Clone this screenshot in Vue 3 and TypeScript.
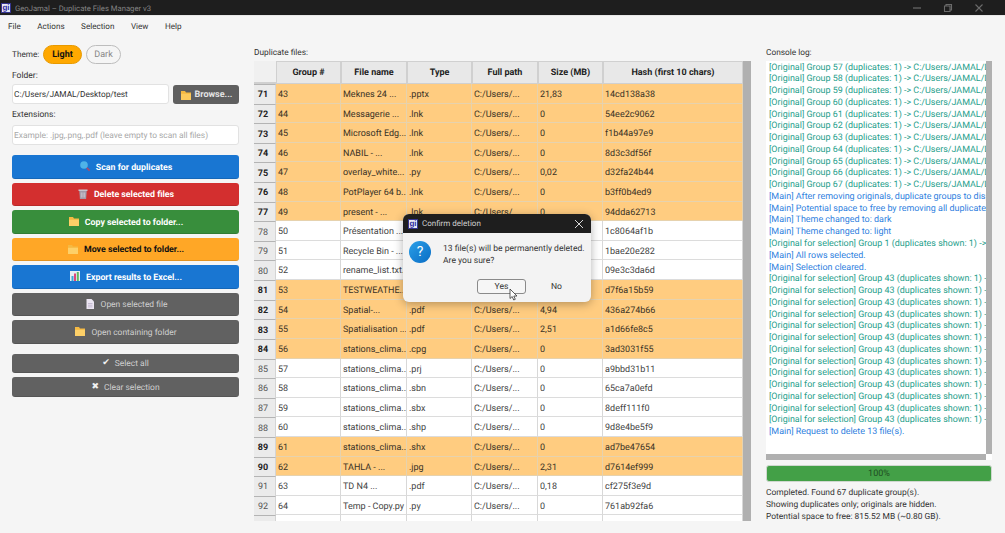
<script setup lang="ts">
interface Row { n: number; g: number; name: string; type: string; size: string; hash: string; sel: boolean }
const raw: [number, string, string, string, string, boolean][] = [
  [71, 'Meknes 24 ...', '.pptx', '21,83', '14cd138a38', true],
  [72, 'Messagerie ...', '.lnk', '0', '54ee2c9062', true],
  [73, 'Microsoft Edg...', '.lnk', '0', 'f1b44a97e9', true],
  [74, 'NABIL - ...', '.lnk', '0', '8d3c3df56f', true],
  [75, 'overlay_white...', '.py', '0,02', 'd32fa24b44', true],
  [76, 'PotPlayer 64 b...', '.lnk', '0', 'b3ff0b4ed9', true],
  [77, 'present - ...', '.lnk', '0', '94dda62713', true],
  [78, 'Présentation ...', '.pptx', '0', '1c8064af1b', false],
  [79, 'Recycle Bin - ...', '.lnk', '0', '1bae20e282', false],
  [80, 'rename_list.txt...', '.txt', '0', '09e3c3da6d', false],
  [81, 'TESTWEATHE...', '.py', '0', 'd7f6a15b59', true],
  [82, 'Spatial-...', '.pdf', '4,94', '436a274b66', true],
  [83, 'Spatialisation ...', '.pdf', '2,51', 'a1d66fe8c5', true],
  [84, 'stations_clima...', '.cpg', '0', '3ad3031f55', true],
  [85, 'stations_clima...', '.prj', '0', 'a9bbd31b11', false],
  [86, 'stations_clima...', '.sbn', '0', '65ca7a0efd', false],
  [87, 'stations_clima...', '.sbx', '0', '8deff111f0', false],
  [88, 'stations_clima...', '.shp', '0', '9d8e4be5f9', false],
  [89, 'stations_clima...', '.shx', '0', 'ad7be47654', true],
  [90, 'TAHLA - ...', '.jpg', '2,31', 'd7614ef999', true],
  [91, 'TD N4  ...', '.pdf', '0,18', 'cf275f3e9d', false],
  [92, 'Temp - Copy.py', '.py', '0', '761ab92fa6', false],
  [93, '', '', '', '', false],
]
const rows: Row[] = raw.map((r) => ({
  n: r[0], g: r[0] - 28, name: r[1], type: r[2], size: r[3], hash: r[4], sel: r[5],
}))
const columns = ['Group #', 'File name', 'Type', 'Full path', 'Size (MB)', 'Hash (first 10 chars)']
const menus = ['File', 'Actions', 'Selection', 'View', 'Help']

const actions = [
  { label: 'Scan for duplicates', cls: 'blue', icon: 'scan' },
  { label: 'Delete selected files', cls: 'red', icon: 'trash' },
  { label: 'Copy selected to folder...', cls: 'green', icon: 'folder' },
  { label: 'Move selected to folder...', cls: 'amber', icon: 'folder' },
  { label: 'Export results to Excel...', cls: 'blue', icon: 'chart' },
  { label: 'Open selected file', cls: 'gray', icon: 'file' },
  { label: 'Open containing folder', cls: 'gray', icon: 'folder' },
]

const logs: { text: string; info: boolean }[] = []
for (let g = 57; g <= 67; g++) logs.push({ text: `[Original] Group ${g} (duplicates: 1) -> C:/Users/JAMAL/Desktop/test/file`, info: false })
logs.push({ text: '[Main] After removing originals, duplicate groups to display: 67', info: true })
logs.push({ text: '[Main] Potential space to free by removing all duplicates: 815.52 MB', info: true })
logs.push({ text: '[Main] Theme changed to: dark', info: true })
logs.push({ text: '[Main] Theme changed to: light', info: true })
logs.push({ text: '[Original for selection] Group 1 (duplicates shown: 1) -> C:/Users/JAMAL', info: false })
logs.push({ text: '[Main] All rows selected.', info: true })
logs.push({ text: '[Main] Selection cleared.', info: true })
for (let i = 0; i < 13; i++) logs.push({ text: '[Original for selection] Group 43 (duplicates shown: 1) -> C:/Users/JAMAL', info: false })
logs.push({ text: '[Main] Request to delete 13 file(s).', info: true })
</script>

<template>
  <div class="app">
    <header class="titlebar">
      <span class="logo">gi</span>
      <span class="title">GeoJamal – Duplicate Files Manager v3</span>
      <span class="winbtns">
        <svg width="10" height="10" viewBox="0 0 10 10"><path d="M1 5h8" stroke="#6b6b6b" stroke-width="1.2" /></svg>
        <svg width="10" height="10" viewBox="0 0 10 10"><path d="M1.5 3h5.500v5.500h-5.500z M3 3v-1.500h5.500v5.500h-1.500" fill="none" stroke="#6b6b6b" stroke-width="1.100" /></svg>
        <svg width="10" height="10" viewBox="0 0 10 10"><path d="M1.500 1.500l7 7M8.500 1.500l-7 7" stroke="#6b6b6b" stroke-width="1.100" /></svg>
      </span>
    </header>
    <nav class="menubar">
      <span v-for="m in menus" :key="m">{{ m }}</span>
    </nav>

    <main class="main">
      <aside class="left">
        <div class="theme">
          <span class="theme-lbl">Theme:</span>
          <span class="pill on">Light</span>
          <span class="pill">Dark</span>
        </div>
        <label class="lbl folder-lbl">Folder:</label>
        <div class="folder-row">
          <div class="input">C:/Users/JAMAL/Desktop/test</div>
          <button class="browse">
            <svg class="ico" viewBox="0 0 12 12"><path d="M1 2h4l1 1.500h5V11H1z" fill="#f5b942" /><path d="M1 4.800h10V11H1z" fill="#fdca5c" /></svg>
            Browse...
          </button>
        </div>
        <label class="lbl ext-lbl">Extensions:</label>
        <div class="input ph">Example: .jpg,.png,.pdf (leave empty to scan all files)</div>

        <div class="actions">
          <button v-for="a in actions" :key="a.label" class="act" :class="a.cls">
            <svg v-if="a.icon === 'scan'" class="ico" viewBox="0 0 12 12"><circle cx="5" cy="5" r="3.800" fill="#4fb3e8" /><path d="M7.800 7.800l2.800 2.800" stroke="#a84a70" stroke-width="1.700" /></svg>
            <svg v-else-if="a.icon === 'trash'" class="ico" viewBox="0 0 12 12"><path d="M1.500 1.500h9v1.500h-9z" fill="#c9c3cc" /><path d="M2.300 3h7.400l-.6 8H2.900z" fill="#a39aa8" /><path d="M4.300 4.500v5M6 4.500v5M7.700 4.500v5" stroke="#d8d3da" stroke-width=".7" /></svg>
            <svg v-else-if="a.icon === 'folder'" class="ico" viewBox="0 0 12 12"><path d="M1 2h4l1 1.500h5V11H1z" fill="#f5b942" /><path d="M1 4.800h10V11H1z" fill="#fdd068" /></svg>
            <svg v-else-if="a.icon === 'chart'" class="ico" viewBox="0 0 12 12"><path d="M1 1h10v10H1z" fill="#e6eef3" /><path d="M2.500 6h2v5h-2z" fill="#3fa7d6" /><path d="M5 3.500h2V11H5z" fill="#e0457b" /><path d="M7.800 2h2v9h-2z" fill="#5fb760" /></svg>
            <svg v-else class="ico" viewBox="0 0 12 12"><path d="M2.500 1h5L10 3.500V11H2.500z" fill="#ece6f2" /><path d="M4 5.500h4.500M4 7.200h4.500M4 8.900h4.500" stroke="#b5a9c4" stroke-width=".7" /></svg>
            <span>{{ a.label }}</span>
          </button>
        </div>
        <div class="selects">
          <button class="act gray small"><span class="glyph">✔</span><span>Select all</span></button>
          <button class="act gray small"><span class="glyph">✖</span><span>Clear selection</span></button>
        </div>
      </aside>

      <section class="center">
        <label class="lbl head-lbl">Duplicate files:</label>
        <div class="tablewrap">
          <div class="table">
            <div class="tr thead">
              <div class="corner"></div>
              <div v-for="c in columns" :key="c" class="th">{{ c }}</div>
            </div>
            <div v-for="r in rows" :key="r.n" class="tr" :class="{ sel: r.sel }">
              <div class="rowhead">{{ r.name ? r.n : '' }}</div>
              <div class="td">{{ r.name ? r.g : '' }}</div>
              <div class="td">{{ r.name }}</div>
              <div class="td">{{ r.type }}</div>
              <div class="td">{{ r.name ? 'C:/Users/...' : '' }}</div>
              <div class="td">{{ r.size }}</div>
              <div class="td">{{ r.hash }}</div>
            </div>
          </div>
          <div class="vscroll"></div>
        </div>
      </section>

      <section class="right">
        <label class="lbl head-lbl">Console log:</label>
        <div class="console">
          <div class="logview">
            <div class="loglines">
              <div v-for="(l, i) in logs" :key="i" class="log" :class="{ info: l.info }">{{ l.text }}</div>
            </div>
            <div class="vscroll narrow"></div>
          </div>
          <div class="hrow"><div class="hscroll"></div><div class="hcorner"></div></div>
        </div>
        <div class="progress">100%</div>
        <div class="status">
          <div>Completed. Found 67 duplicate group(s).</div>
          <div>Showing duplicates only; originals are hidden.</div>
          <div>Potential space to free: 815.52 MB (~0.80 GB).</div>
        </div>
      </section>
    </main>

    <div class="dialog">
      <div class="dlg-title">
        <span class="logo">gi</span>
        <span>Confirm deletion</span>
        <svg class="dlg-x" width="10" height="10" viewBox="0 0 10 10"><path d="M1 1l8 8M9 1l-8 8" stroke="#d8d8d8" stroke-width="1" /></svg>
      </div>
      <div class="dlg-body">
        <span class="q">?</span>
        <div class="dlg-text">13 file(s) will be permanently deleted.<br />Are you sure?</div>
      </div>
      <div class="dlg-btns">
        <button class="dlg-btn yes">Yes</button>
        <button class="dlg-btn">No</button>
      </div>
    </div>
    <svg class="cursor" width="9" height="13" viewBox="0 0 9 13"><path d="M1 1v9.500l2.200-2 1.500 3.500 1.600-.7-1.500-3.300H8z" fill="#fff" stroke="#333" stroke-width=".8" /></svg>
  </div>
</template>

<style>
html, body { margin: 0; background: #f5f5f5; }
</style>

<style scoped>
.app {
  position: relative;
  width: 1005px;
  height: 533px;
  overflow: hidden;
  display: flex;
  flex-direction: column;
  background: #f5f5f5;
  color: #333;
  font-family: Roboto, "Noto Sans", sans-serif;
  font-size: 9px;
  text-rendering: geometricPrecision;
}
button { font-family: inherit; font-size: inherit; text-rendering: inherit; border: none; padding: 0; margin: 0; }
.titlebar {
  height: 15px;
  background: #1e1e1e;
  display: flex;
  align-items: center;
  color: #858585;
  flex: none;
}
.title { font-size: 7.700px; padding-top: 1px; }
.logo {
  width: 10px;
  height: 10px;
  margin: 0 4px 0 1px;
  background: #e8e8f4;
  border: 1px solid #35358f;
  box-sizing: border-box;
  color: #2b2ba0;
  font: bold 8px/8px "Liberation Sans", sans-serif;
  text-align: center;
}
.winbtns { margin-left: auto; display: flex; gap: 21px; margin-right: 21px; }
.menubar {
  height: 20px;
  flex: none;
  display: flex;
  align-items: center;
  gap: 16.500px;
  padding-left: 8px;
  color: #333;
  font-size: 8.100px;
  border-top: 1px solid #e8e8e8;
  box-sizing: border-box;
}
.main {
  flex: 1;
  min-height: 0;
  display: flex;
  padding: 10px 13px 0 12px;
  gap: 15px;
}
.left { width: 227px; flex: none; display: flex; flex-direction: column; }
.theme { display: flex; align-items: center; height: 19px; gap: 4px; }
.theme-lbl { width: 27px; font-size: 8.200px; padding-top: 1px; }
.pill {
  height: 19px;
  width: 35px;
  box-sizing: border-box;
  border-radius: 10px;
  border: 1px solid #bdbdbd;
  background: #f5f5f5;
  color: #888;
  text-align: center;
  line-height: 18px;
}
.pill.on { width: 39px; background: #ffa800; border-color: #e89a00; color: #111; font-weight: 700; }
.lbl { display: block; font-size: 8.500px; }
.folder-lbl { margin-top: 6px; line-height: 13px; }
.folder-row { display: flex; gap: 4px; margin-top: 1px; }
.input {
  flex: 1;
  height: 20px;
  box-sizing: border-box;
  background: #fff;
  border: 1px solid #e2e2e2;
  border-radius: 3px;
  padding: 1px 0 0 1px;
  line-height: 18px;
  font-size: 8.300px;
  white-space: nowrap;
  overflow: hidden;
  flex-shrink: 0;
}
.ph { color: #a8a8a8; flex: none; font-size: 8.400px; }
.browse {
  width: 66px;
  height: 19px;
  margin-top: 1px;
  padding-top: 1px;
  background: #5f5f5f;
  color: #e4e4e4;
  border-radius: 3px;
  font-weight: 700;
  display: flex;
  align-items: center;
  justify-content: center;
  gap: 3px;
  flex: none;
}
.ext-lbl { margin: 3px 0 2px; line-height: 16px; }
.actions { display: flex; flex-direction: column; gap: 4px; margin-top: 10px; }
.act {
  height: 23.500px;
  width: 100%;
  border-radius: 3px;
  display: flex;
  align-items: center;
  justify-content: center;
  gap: 5px;
  padding-top: 3px;
  font-weight: 700;
  font-size: 8.800px;
  color: #fff;
  border-bottom: 1px solid rgba(0, 0, 0, 0.12);
  box-sizing: border-box;
}
.act .ico { margin-top: -3px; }
.ico { width: 12px; height: 12px; flex: none; }
.blue { background: #1976d2; }
.red { background: #d32f2f; }
.green { background: #388e3c; }
.amber { background: #ffa726; color: #111; }
.gray { background: #616161; color: #cfcfcf; font-weight: 400; font-size: 8.450px; }
.selects { display: flex; flex-direction: column; gap: 4px; margin-top: 10px; }
.small { height: 19.500px; }
.glyph { color: #f1f1f1; font-size: 9px; font-family: "DejaVu Sans", sans-serif; margin-top: -2px; }

.center { width: 497px; flex: none; display: flex; flex-direction: column; min-height: 0; }
.head-lbl { font-size: 8.300px; line-height: 16px; height: 16px; flex: none; }
.tablewrap { position: relative; display: flex; height: 460px; flex: none; background: #fff; overflow: hidden; }
.table { flex: 1; min-width: 0; overflow: hidden; }
.tr {
  display: grid;
  grid-template-columns: 22px 65px 66px 65px 66px 65px 140px;
  height: 19.620px;
  color: #444;
}
.tr.sel { background: #ffcc80; color: #3a3226; }
.thead { height: 23px; color: #222; font-weight: 700; }
.corner { background: #f0f0f0; border-bottom: 2px solid #d0d0d0; box-sizing: border-box; }
.th {
  background: #e8e8e8;
  border: 1px solid #d0d0d0;
  box-sizing: border-box;
  display: flex;
  align-items: center;
  justify-content: center;
  padding-top: 1px;
}
.rowhead {
  background: #ebebeb;
  border-top: 1px solid #b4b4b4;
  border-right: 1px solid #d4d4d4;
  box-sizing: border-box;
  display: flex;
  align-items: center;
  justify-content: center;
  padding: 2px 3px 0 0;
  font-weight: 400;
  color: #555;
  height: 19.620px;
}
.sel .rowhead { font-weight: 700; color: #222; }
.td {
  border-right: 1px solid #d8d8d8;
  border-bottom: 1px solid #dcdcdc;
  box-sizing: border-box;
  padding: 1px 0 0 2px;
  line-height: 20px;
  white-space: nowrap;
  overflow: hidden;
}
.sel .td { border-color: #e6d2ae; }
.vscroll { width: 8px; flex: none; background: #b0b0b0; }
.vscroll.narrow { width: 6px; }

.right { width: 226px; flex: none; display: flex; flex-direction: column; min-height: 0; }
.console { height: 399px; flex: none; background: #fff; display: flex; flex-direction: column; }
.logview { flex: 1; min-height: 0; display: flex; }
.loglines { flex: 1; min-width: 0; overflow: hidden; padding: 0 0 0 3px; }
.log { color: #26a08c; line-height: 11.770px; white-space: nowrap; overflow: hidden; font-size: 8.950px; }
.log:first-child { margin-top: 1.500px; }
.log.info { color: #2f7fe0; }
.hrow { height: 6px; display: flex; flex: none; }
.hscroll { flex: 1; background: #b0b0b0; }
.hcorner { width: 6px; background: #fff; }
.progress {
  margin-top: 5px;
  height: 17px;
  flex: none;
  background: #43a047;
  border: 1px solid #cfd8cf;
  border-radius: 3px;
  box-sizing: border-box;
  text-align: center;
  line-height: 16px;
  color: #1f4d22;
}
.status { margin-top: 5px; line-height: 12px; color: #333; font-size: 8.450px; }

.dialog {
  position: absolute;
  left: 403px;
  top: 214px;
  width: 188px;
  height: 88px;
  background: #f3f3f3;
  border-radius: 6px;
  overflow: hidden;
  box-shadow: 0 2px 10px rgba(0, 0, 0, 0.3);
  display: flex;
  flex-direction: column;
  color: #333;
  font-size: 8.550px;
}
.dlg-title {
  height: 19px;
  background: #1e1e1e;
  color: #cfcfcf;
  font-size: 8px;
  display: flex;
  align-items: center;
  padding-left: 4px;
  flex: none;
}
.dlg-title .logo { margin: 0 4px 0 1px; }
.dlg-x { margin-left: auto; margin-right: 7px; }
.dlg-body { display: flex; padding: 8px 6px 0; gap: 12px; }
.q {
  width: 22px;
  height: 22px;
  border-radius: 50%;
  background: linear-gradient(135deg, #2aa0e8, #0a6cc4);
  color: #fff;
  font-size: 14px;
  line-height: 22px;
  text-align: center;
  flex: none;
}
.dlg-text { line-height: 12px; padding-top: 2px; white-space: nowrap; }
.dlg-btns { display: flex; margin-top: auto; padding: 0 0 8px 74px; gap: 6px; }
.dlg-btn { width: 49px; height: 15px; background: transparent; color: #333; line-height: 13px; padding-top: 1px; }
.yes { border: 1px solid #8a8a8a; border-radius: 3px; background: #f6f6f6; box-sizing: border-box; }
.cursor { position: absolute; left: 509px; top: 288px; }
</style>
